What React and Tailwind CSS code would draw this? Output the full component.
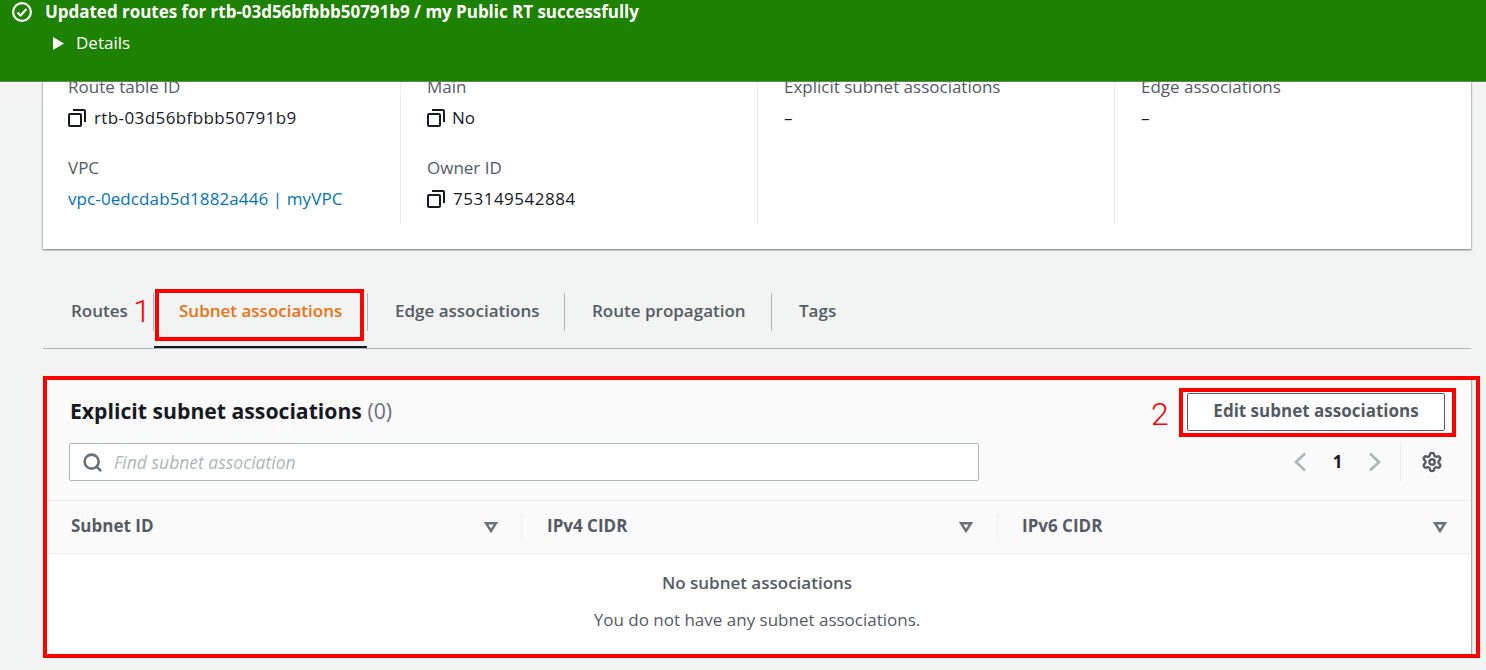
import { Settings, Search } from "lucide-react";

const FONT = "font-['Open_Sans','Noto_Sans',sans-serif]";

function CopyIcon() {
  return (
    <svg width="18" height="18" viewBox="0 0 18 18" fill="none" stroke="#16191f" strokeWidth="2" className="shrink-0">
      <rect x="1" y="5" width="12" height="12" rx="1" />
      <path d="M5 1h11a1 1 0 0 1 1 1v11" />
    </svg>
  );
}

function Caret() {
  return (
    <svg width="14" height="12" viewBox="0 0 14 12" fill="none" stroke="#687078" strokeWidth="2.4">
      <path d="M2 2.2h10L7 10z" />
    </svg>
  );
}

function Chevron({ dir }) {
  return (
    <svg width="12" height="20" viewBox="0 0 12 20" fill="none" stroke="#aab7b8" strokeWidth="2.6">
      <path d={dir === "left" ? "M11 1.5L2 10l9 8.5" : "M1 1.5L10 10l-9 8.5"} />
    </svg>
  );
}

function Field({ label, children }) {
  return (
    <div>
      <div className="h-[24px] leading-[24px] text-[#545b64]">{label}</div>
      <div className="mt-[7px] h-[24px] leading-[24px] text-[#16191f] flex items-center gap-[8px]">{children}</div>
    </div>
  );
}

const columns = [
  { name: "Subnet ID", cls: "pl-[28px] pr-[23px] border-r" },
  { name: "IPv4 CIDR", cls: "pl-[25px] pr-[24px] border-r" },
  { name: "IPv6 CIDR", cls: "pl-[24px] pr-[24px]" },
];
const tabs = [
  { name: "Routes", cls: "w-[111px] pl-[28px]" },
  { name: "Subnet associations", cls: "w-[214px] pl-[25px] text-[#ec7211]" },
  { name: "Edge associations", cls: "w-[197px] pl-[27px]" },
  { name: "Route propagation", cls: "w-[207px] pl-[27px]" },
  { name: "Tags", cls: "pl-[27px]" },
];

export default function App() {
  return (
    <div className={`relative h-[670px] w-[1486px] overflow-hidden bg-[#f2f3f3] text-[17px] ${FONT}`}>
      {/* Flash banner */}
      <div className="relative z-10 h-[82px] bg-[#1d8102] text-white border-b border-[#5c8a50] pl-[12px]">
        <div className="flex items-center gap-[13px] h-[24px]">
          <svg width="20" height="20" viewBox="0 0 20 20" fill="none" stroke="white" strokeWidth="2.2">
            <circle cx="10" cy="10" r="8.9" />
            <path d="M5.5 10.5l3 3 6-6.5" />
          </svg>
          <span className="font-bold leading-[24px] tracking-[-0.03px]">Updated routes for rtb-03d56bfbbb50791b9 / my Public RT successfully</span>
        </div>
        <div className="flex items-center gap-[12px] mt-[7px] ml-[41px] h-[24px]">
          <svg width="11" height="13" viewBox="0 0 11 13" fill="white"><path d="M0 0l11 6.5-11 6.5z" /></svg>
          <span className="leading-[24px]">Details</span>
        </div>
      </div>

      <div className="pl-[43px] pr-[15px] -mt-[1px]">
        {/* Details card */}
        <div className="h-[168px] bg-white shadow-[0_1px_2px_rgba(0,28,36,0.4),1px_1px_1px_rgba(0,28,36,0.1),-1px_1px_1px_rgba(0,28,36,0.1)] overflow-hidden">
          <div className="grid grid-cols-[358px_357px_357px_1fr] h-[149px] -mt-[6px]">
            <div className="flex flex-col gap-[26px] border-r border-[#eaeded] pl-[25px]">
              <Field label="Route table ID"><CopyIcon /><span className="tracking-[0.4px]">rtb-03d56bfbbb50791b9</span></Field>
              <Field label="VPC"><span className="text-[#0073bb] tracking-[0.1px]">vpc-0edcdab5d1882a446 | myVPC</span></Field>
            </div>
            <div className="flex flex-col gap-[26px] border-r border-[#eaeded] pl-[26px]">
              <Field label="Main"><CopyIcon /><span className="-ml-[1px]">No</span></Field>
              <Field label="Owner ID"><CopyIcon /><span className="tracking-[0.5px]">753149542884</span></Field>
            </div>
            <div className="border-r border-[#eaeded] pl-[26px]">
              <Field label="Explicit subnet associations">–</Field>
            </div>
            <div className="pl-[26px]">
              <Field label="Edge associations">–</Field>
            </div>
          </div>
        </div>

        {/* Tabs */}
        <div className="mt-[41px] h-[59px] border-b border-[#aab7b8] flex items-start pt-[3px]">
          {tabs.map((t, i) => (
            <div key={t.name} className={`h-[38px] leading-[36px] font-semibold text-[#545b64] ${i < 4 ? "border-r border-[#aab7b8]" : ""} ${t.cls}`}>
              {t.name}
            </div>
          ))}
        </div>

        {/* Associations table */}
        <div className="mt-[31px] bg-white shadow-[1px_0_1px_rgba(0,28,36,0.3)]">
          <div className="bg-[#fafafa] h-[121px] pl-[27px] pr-[26px] border-b border-[#eaeded] flex flex-col">
            <div className="h-[63px] flex items-start justify-between pt-[15px]">
              <div className="text-[21.2px] leading-[32px] font-bold text-[#16191f]">
                Explicit subnet associations <span className="font-normal text-[#687078]">(0)</span>
              </div>
              <button className="-mt-[2px] w-[258px] h-[38px] bg-white border border-[#545b64] rounded-[2px] font-bold text-[#545b64] leading-[30px] pb-[2px]">
                Edit subnet associations
              </button>
            </div>
            <div className="flex items-start justify-between -ml-[1px]">
              <div className="w-[910px] h-[38px] bg-white border border-[#aab7b8] rounded-[2px] flex items-center pl-[13px] gap-[11px]">
                <Search size={21} strokeWidth={3} color="#687078" className="-ml-[1px]" />
                <span className="italic text-[17.5px] text-[#aab7b8]">Find subnet association</span>
              </div>
              <div className="flex items-center h-[38px] pr-[2px]">
                <Chevron dir="left" />
                <span className="w-[63px] text-center font-bold text-[#16191f]">1</span>
                <Chevron dir="right" />
                <div className="h-[38px] border-l border-[#eaeded] ml-[19px] pl-[20px] flex items-center">
                  <Settings size={22} strokeWidth={2.6} color="#545b64" />
                </div>
              </div>
            </div>
          </div>
          <div className="grid grid-cols-[479px_476px_1fr] h-[53px] bg-[#fafafa] border-b border-[#eaeded] items-center">
            {columns.map((c) => (
              <div key={c.name} className={`flex items-center justify-between h-[26px] font-bold text-[#545b64] border-[#eaeded] ${c.cls}`}>
                <span className="-mt-[2px]">{c.name}</span>
                <Caret />
              </div>
            ))}
          </div>
          <div className="h-[101px] text-center pt-[17px]">
            <div className="font-semibold text-[#545b64] leading-[24px]">No subnet associations</div>
            <div className="mt-[13px] text-[#545b64] leading-[24px]">You do not have any subnet associations.</div>
          </div>
        </div>
      </div>

      {/* Active tab underline and red annotation overlays */}
      <div className="absolute z-10 left-[154px] top-[346px] w-[213px] h-[2px] bg-[#16191f]" />
      <div className="absolute z-20 left-[155px] top-[289px] w-[209px] h-[52px] border-4 border-[#ff0000]" />
      <div className="absolute z-20 left-[43px] top-[376px] w-[1437px] h-[282px] border-4 border-[#ff0000]" />
      <div className="absolute z-20 left-[1179px] top-[388px] w-[277px] h-[49px] border-4 border-[#ff0000]" />
      <div className="absolute z-20 left-[133px] top-[292px] text-[32px] leading-[38px] font-light text-[#ff0000] font-['Roboto',sans-serif]">1</div>
      <div className="absolute z-20 left-[1151px] top-[395px] text-[32px] leading-[38px] font-light text-[#ff0000] font-['Roboto',sans-serif]">2</div>
    </div>
  );
}
